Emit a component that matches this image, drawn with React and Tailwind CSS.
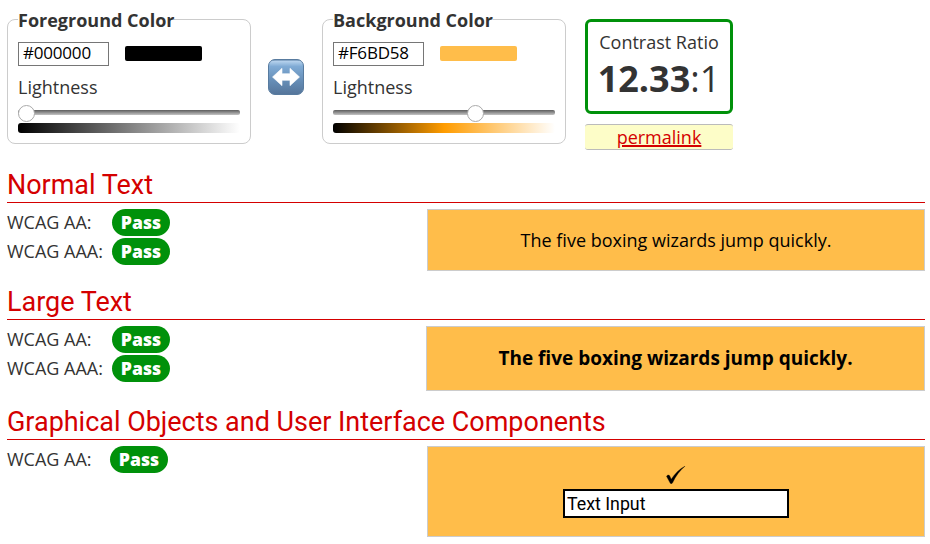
function Panel({ title, value, swatch, gradient, thumb }) {
  return (
    <div className="flex h-[125px] w-[244px] flex-col items-start rounded-[8px] border border-[#ccc] px-[10px]">
      <div className="-mt-[13px] h-[26px] bg-white text-[18px] leading-[26px] font-bold whitespace-nowrap">{title}</div>
      <div className="mt-[9px] flex h-[24px] items-center">
        <div className="h-[24px] w-[91px] border border-[#767676] pl-[4px] text-[17px] leading-[20px] tracking-[-0.2px] text-black">{value}</div>
        <div className={`-mt-px ml-[16px] h-[15px] w-[77px] rounded-[2px] ${swatch}`} />
      </div>
      <div className="mt-[9px] h-[24px] text-[18px] leading-[24px]">Lightness</div>
      <div className="mt-[5px] flex h-[17px] w-[222px] items-center">
        <div className="flex h-[5px] w-full items-center rounded-[2px] bg-[linear-gradient(to_bottom,#5c5c5c,#c4c4c4)]">
          <div className={`mt-px h-[17px] w-[17px] shrink-0 rounded-full border border-[#aaa] bg-white ${thumb}`} />
        </div>
      </div>
      <div className={`mt-[2px] h-[10px] w-[222px] rounded-[3px] ${gradient}`} />
    </div>
  );
}

function Row({ label, labelWidth }) {
  return (
    <div className="flex h-[27px] items-center">
      <span className={`text-[18px] leading-[27px] whitespace-nowrap ${labelWidth}`}>{label}</span>
      <span className="h-[27px] w-[58px] rounded-full bg-[#00910a] text-center text-[17.6px] leading-[27px] font-extrabold text-white">Pass</span>
    </div>
  );
}

function Heading({ children }) {
  return (
    <h2 className="h-[36px] border-b border-[#d40000] font-[Roboto,sans-serif] text-[26.96px] leading-[37px] whitespace-nowrap text-[#d40000]">
      {children}
    </h2>
  );
}

export default function App() {
  return (
    <div className="h-[544px] w-[930px] overflow-hidden bg-white pt-[19px] pr-[5px] pl-[7px] font-['Open_Sans',sans-serif] text-[#333]">
      <div className="flex h-[131px] items-start">
        <Panel title="Foreground Color" value="#000000" swatch="bg-black" gradient="bg-[linear-gradient(to_right,#000,#808080_50%,#fff)]" thumb="ml-0" />
        <svg className="mt-[40px] mr-[18px] ml-[17px] h-[36px] w-[36px]" viewBox="0 0 36 36">
          <defs>
            <linearGradient id="key" x1="0" y1="0" x2="0" y2="1">
              <stop offset="0" stopColor="#4c7096" />
              <stop offset=".05" stopColor="#b5d1ec" />
              <stop offset=".2" stopColor="#80abd5" />
              <stop offset=".6" stopColor="#668eb7" />
              <stop offset="1" stopColor="#55759a" />
            </linearGradient>
          </defs>
          <rect x=".5" y=".5" width="35" height="35" rx="6.5" fill="url(#key)" stroke="#587b9f" />
          <path d="M4.5 18L14 9.3V14.7H22V9.3L31.5 18L22 26.7V21.3H14V26.7Z" fill="white" stroke="white" strokeWidth=".6" strokeLinejoin="round" />
        </svg>
        <Panel title="Background Color" value="#F6BD58" swatch="bg-[#ffbd4a]" gradient="bg-[linear-gradient(to_right,#000,#ff9c00_50%,#fff)]" thumb="ml-[133.5px]" />
        <div className="ml-[19px] w-[148px]">
          <div className="h-[95px] rounded-[6px] border-3 border-[#00910a] text-center">
            <div className="mt-[8px] h-[24px] text-[18px] leading-[24px]">Contrast Ratio</div>
            <div className="h-[50px] text-[36px] leading-[50px] whitespace-nowrap"><b>12.33</b>:1</div>
          </div>
          <div className="mt-[10px] h-[26px] rounded-[3px] border-y border-[#bbb] bg-[#fdfdc8] text-center text-[18px] leading-[25px] text-[#d40000] underline decoration-2 underline-offset-1">permalink</div>
        </div>
      </div>
      <div className="mt-[17px]">
        <Heading>Normal Text</Heading>
      </div>
      <div className="mt-[6px] flex justify-between">
        <div className="flex flex-col gap-[2px]">
          <Row label="WCAG AA:" labelWidth="w-[105px]" />
          <Row label="WCAG AAA:" labelWidth="w-[105px]" />
        </div>
        <div className="h-[62px] w-[498px] border border-[#ccc] bg-[#ffbd4a] text-center text-[18px] leading-[61px] text-black">
          The five boxing wizards jump quickly.
        </div>
      </div>
      <div className="mt-[13px]">
        <Heading>Large Text</Heading>
      </div>
      <div className="mt-[6px] flex justify-between">
        <div className="flex flex-col gap-[2px]">
          <Row label="WCAG AA:" labelWidth="w-[105px]" />
          <Row label="WCAG AAA:" labelWidth="w-[105px]" />
        </div>
        <div className="h-[65px] w-[499px] border border-[#ccc] bg-[#ffbd4a] text-center text-[19px] leading-[62px] font-bold text-black">
          The five boxing wizards jump quickly.
        </div>
      </div>
      <div className="mt-[13px]">
        <Heading>Graphical Objects and User Interface Components</Heading>
      </div>
      <div className="mt-[6px] flex justify-between">
        <Row label="WCAG AA:" labelWidth="w-[103px]" />
        <div className="flex h-[91px] w-[498px] flex-col items-center border border-[#ccc] bg-[#ffbd4a] text-black">
          <svg className="mt-[19px] mr-[1px] h-[18px] w-[20px]" viewBox="0 0 20 18">
            <path d="M.5 10.2C1.5 8.8 3.2 8.6 3.8 10L5.2 13.2C9 7.5 13.5 3 19.2 0C14 4.6 9.6 10 6.6 16.8C6 18 4.5 18 4 16.8Z" fill="currentColor" stroke="currentColor" strokeWidth=".3" />
          </svg>
          <div className="mt-[5px] h-[29px] w-[226px] border-2 border-black bg-white pl-[2px] font-[Roboto,sans-serif] text-[17.8px] leading-[26px]">Text Input</div>
        </div>
      </div>
    </div>
  );
}
